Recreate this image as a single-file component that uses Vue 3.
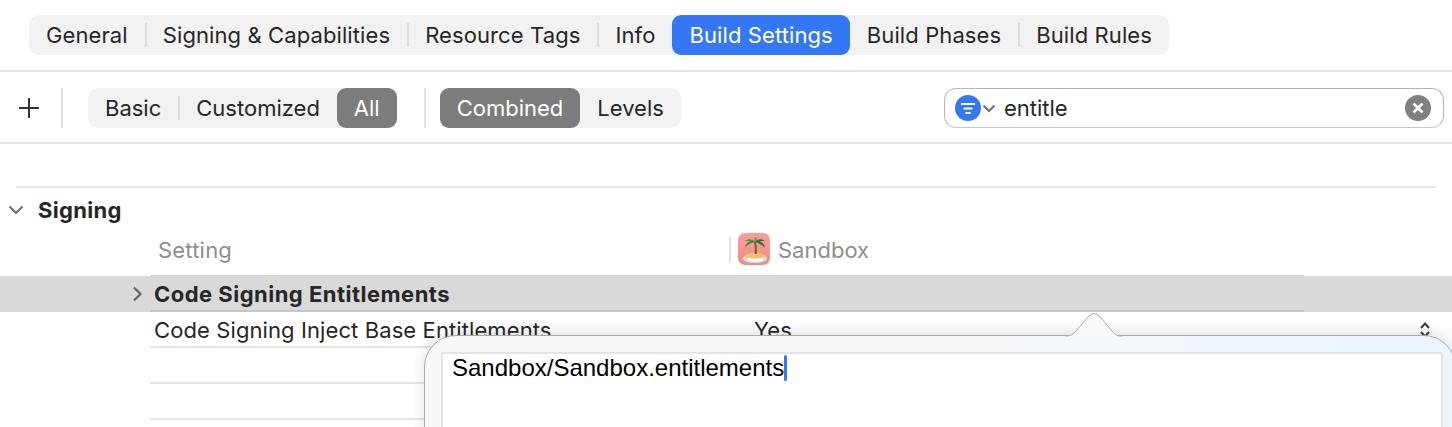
<template>
  <div class="page">
    <div class="tabs-row">
      <div class="seg tabs">
        <template v-for="(t, i) in tabs" :key="t">
          <span :class="['seg-item', { active: t === 'Build Settings' }]">{{ t }}</span>
          <i v-if="showSep(tabs, i, 'Build Settings')" class="sep"></i>
        </template>
      </div>
    </div>

    <div class="toolbar">
      <svg class="plus" width="22" height="22" viewBox="0 0 22 22">
        <path d="M11 1v20M1 11h20" stroke="#333" stroke-width="2" fill="none" />
      </svg>
      <i class="tool-div first"></i>
      <div class="seg small">
        <span class="seg-item">Basic</span>
        <i class="sep"></i>
        <span class="seg-item">Customized</span>
        <span class="seg-item grey">All</span>
      </div>
      <i class="tool-div second"></i>
      <div class="seg small">
        <span class="seg-item grey">Combined</span>
        <span class="seg-item">Levels</span>
      </div>
      <div class="search">
        <span class="filter">
          <svg width="26" height="26" viewBox="0 0 26 26">
            <circle cx="13" cy="13" r="13" fill="#3478f6" />
            <path d="M6 9h14M8.500 13.500h9M10.500 18h5" stroke="#fff" stroke-width="2" fill="none" />
          </svg>
        </span>
        <svg class="search-chev" width="14" height="9" viewBox="0 0 14 9">
          <path d="M1.500 1.500L7 7l5.500-5.500" stroke="#707070" stroke-width="2" fill="none" />
        </svg>
        <span class="search-text">entitle</span>
        <svg class="clear" width="26" height="26" viewBox="0 0 26 26">
          <circle cx="13" cy="13" r="13" fill="#808080" />
          <path d="M8.500 8.500l9 9M17.500 8.500l-9 9" stroke="#fff" stroke-width="2.600" fill="none" />
        </svg>
      </div>
    </div>

    <div class="spacer"></div>

    <div class="section">
      <div class="section-head">
        <svg width="16" height="10" viewBox="0 0 16 10">
          <path d="M1.500 1.500L8 8l6.500-6.500" stroke="#6e6e6e" stroke-width="2" fill="none" />
        </svg>
        <span>Signing</span>
      </div>
      <div class="col-head">
        <span class="col-setting">Setting</span>
        <i class="col-div"></i>
        <svg class="app-icon" width="32" height="32" viewBox="0 0 32 32">
          <defs>
            <linearGradient id="iconBg" x1="0" y1="0" x2="0" y2="1">
              <stop offset="0" stop-color="#f99f99" />
              <stop offset="1" stop-color="#f58a86" />
            </linearGradient>
          </defs>
          <rect width="32" height="32" rx="7" fill="url(#iconBg)" />
          <ellipse cx="17" cy="25.500" rx="12" ry="4.500" fill="#bfeaf0" />
          <ellipse cx="17" cy="26.500" rx="8" ry="2.200" fill="#f6fbf6" />
          <path d="M6 23.500c2-2.500 6-4 11-4s9 1.500 11 4c-2.500 1.500-6.500 2-11 2s-8.500-.5-11-2z" fill="#f5c26e" />
          <path d="M16.500 21c.6-4.500.4-9-.7-12.500h2c1 3.500 1.300 8 .9 12.500z" fill="#7d5a2b" />
          <path d="M17 9c-2.500-3-6.500-3.800-10-1.200 2.800-.3 4.500 0 5.500.8-3 .2-5 2.400-5.500 6 2.500-3 6-4.600 10-5.600z" fill="#3d8c35" />
          <path d="M17 9c1.800-3 6.500-3.800 10-1 -2.800-.3-4.500 0-5.500.8 3.200.4 5.300 2.800 5.500 6.200-2.500-3-6-5-10-6z" fill="#2c7430" />
          <path d="M17 9c-1-1.700-1.200-3.300.3-5 1.800 1 2.400 3.100-.3 5z" fill="#5aa845" />
        </svg>
        <span class="col-name">Sandbox</span>
      </div>
      <div class="row selected">
        <svg class="row-chev" width="11" height="16" viewBox="0 0 11 16">
          <path d="M2 1.500L8.500 8 2 14.500" stroke="#666" stroke-width="2.200" fill="none" />
        </svg>
        <div class="row-cells"><b>Code Signing Entitlements</b></div>
      </div>
      <div class="row">
        <div class="row-cells">
          <span class="cell-name">Code Signing Inject Base Entitlements</span>
          <span class="cell-value">Yes</span>
        </div>
      </div>
      <div class="row"><div class="row-cells"></div></div>
      <div class="row"><div class="row-cells"></div></div>
    </div>

    <svg class="stepper" width="12" height="18" viewBox="0 0 12 18">
      <path d="M2 7l4-4.500 4 4.500M2 11l4 4.500 4-4.500" stroke="#3c3c3c" stroke-width="2" fill="none" />
    </svg>

    <div class="popover">
      <svg class="pop-arrow" width="58" height="24" viewBox="0 0 58 24">
        <path d="M0 23c5 0 7-.5 10-4L23 4c4-4.500 8-4.500 12 0l13 15c3 3.500 5 4 10 4" fill="#f8f9fa" stroke="#a8a8a8" stroke-width="1" />
      </svg>
      <div class="pop-editor">
        <span class="pop-text">Sandbox/Sandbox.entitlements</span><i class="caret"></i>
      </div>
    </div>
  </div>
</template>

<script setup>
const tabs = ['General', 'Signing & Capabilities', 'Resource Tags', 'Info', 'Build Settings', 'Build Phases', 'Build Rules']

// no separator next to the selected tab, nor after the last one
function showSep(list, i, active) {
  if (i === list.length - 1) return false
  return list[i] !== active && list[i + 1] !== active
}
</script>

<style>
html, body {
  margin: 0;
  background: #fff;
  overflow: hidden;
}
</style>

<style scoped>
.page {
  position: relative;
  width: 1452px;
  height: 427px;
  overflow: hidden;
  background: #fff;
  font-family: Inter, "Liberation Sans", sans-serif;
  font-size: 22px;
  color: #262626;
}
.tabs-row {
  height: 72px;
  padding: 15px 0 0 29px;
  box-sizing: border-box;
  border-bottom: 2px solid #e3e3e3;
}
.seg {
  display: inline-flex;
  align-items: center;
  height: 40px;
  background: #f2f2f2;
  border-radius: 10px;
}
.tabs {
  letter-spacing: 0.1px;
}
.seg-item {
  height: 40px;
  line-height: 40px;
  padding: 0 17px;
  border-radius: 9px;
  white-space: nowrap;
}
.seg-item.active {
  background: #3478f6;
  color: #fff;
}
.seg-item.grey {
  background: #7c7c7c;
  color: #fff;
}
.sep {
  width: 2px;
  height: 24px;
  margin-right: -1px;
  background: #dcdcdc;
}
.toolbar {
  display: flex;
  align-items: center;
  height: 72px;
  box-sizing: border-box;
  border-bottom: 2px solid #e3e3e3;
  padding-top: 2px;
}
.plus {
  margin-left: 18px;
}
.tool-div {
  width: 2px;
  height: 40px;
  background: #e0e0e0;
}
.tool-div.first {
  margin: 0 25px 0 21px;
}
.tool-div.second {
  margin: 0 14px 0 27px;
}
.search {
  display: flex;
  align-items: center;
  box-sizing: border-box;
  width: 500px;
  height: 40px;
  margin-left: 263px;
  padding: 0 12px 0 10px;
  border: 1px solid #b4b4b4;
  border-bottom-color: #c8c8c8;
  border-radius: 12px;
}
.filter {
  display: flex;
}
.search-chev {
  margin-left: 1px;
}
.search-text {
  margin-left: 8px;
  flex: 1;
}
.spacer {
  height: 42px;
  border-bottom: 2px solid #e6e6e6;
  margin: 0 16px;
}
.section-head {
  display: flex;
  align-items: center;
  height: 44px;
  padding-left: 8px;
  font-weight: 700;
  letter-spacing: 0.3px;
}
.section-head span {
  margin-left: 14px;
}
.col-head {
  display: flex;
  align-items: center;
  height: 44px;
  box-sizing: border-box;
  padding: 0 0 8px 158px;
  color: #8e8e8e;
}
.col-setting {
  width: 571px;
  letter-spacing: 0.2px;
}
.col-div {
  width: 2px;
  height: 26px;
  background: #e4e4e4;
}
.app-icon {
  margin: 0 0 3px 7px;
}
.col-name {
  margin-left: 8px;
}
.row {
  position: relative;
  height: 36px;
  padding-left: 150px;
}
.row.selected {
  background: #d9d9d9;
}
.row-chev {
  position: absolute;
  left: 132px;
  top: 10px;
}
.row-cells {
  display: flex;
  align-items: center;
  width: 1154px;
  height: 36px;
  box-sizing: border-box;
  padding: 1px 0 0 4px;
  letter-spacing: 0.1px;
  border-bottom: 2px solid #e6e6e6;
}
.selected .row-cells {
  letter-spacing: 0.48px;
  border-bottom-color: #c6c6c6;
  box-shadow: 0 -1px 0 #d4d4d4;
}
.cell-name {
  width: 600px;
}
.stepper {
  position: absolute;
  left: 1419px;
  top: 321px;
}
.popover {
  position: absolute;
  left: 424px;
  top: 335px;
  width: 1032px;
  height: 200px;
  box-sizing: border-box;
  padding: 16px 0 0 16px;
  border: 1px solid #a9a9a9;
  border-radius: 32px;
  background: linear-gradient(90deg, #f8f8f9 0%, #f6f8fa 55%, #eaf5fd 95%);
  box-shadow: 0 -3px 14px rgba(0, 0, 0, 0.13);
}
.pop-arrow {
  position: absolute;
  left: 640px;
  top: -23px;
}
.pop-editor {
  width: 1002px;
  height: 100%;
  box-sizing: border-box;
  padding-left: 9px;
  background: #fff;
  border: 2px solid #e4e4e4;
  font-family: "Liberation Sans", Arial, sans-serif;
  font-size: 24px;
  line-height: 28px;
  color: #000;
}
.caret {
  display: inline-block;
  width: 3px;
  height: 26px;
  vertical-align: -5px;
  background: #3478f6;
  border-radius: 2px;
}
</style>
